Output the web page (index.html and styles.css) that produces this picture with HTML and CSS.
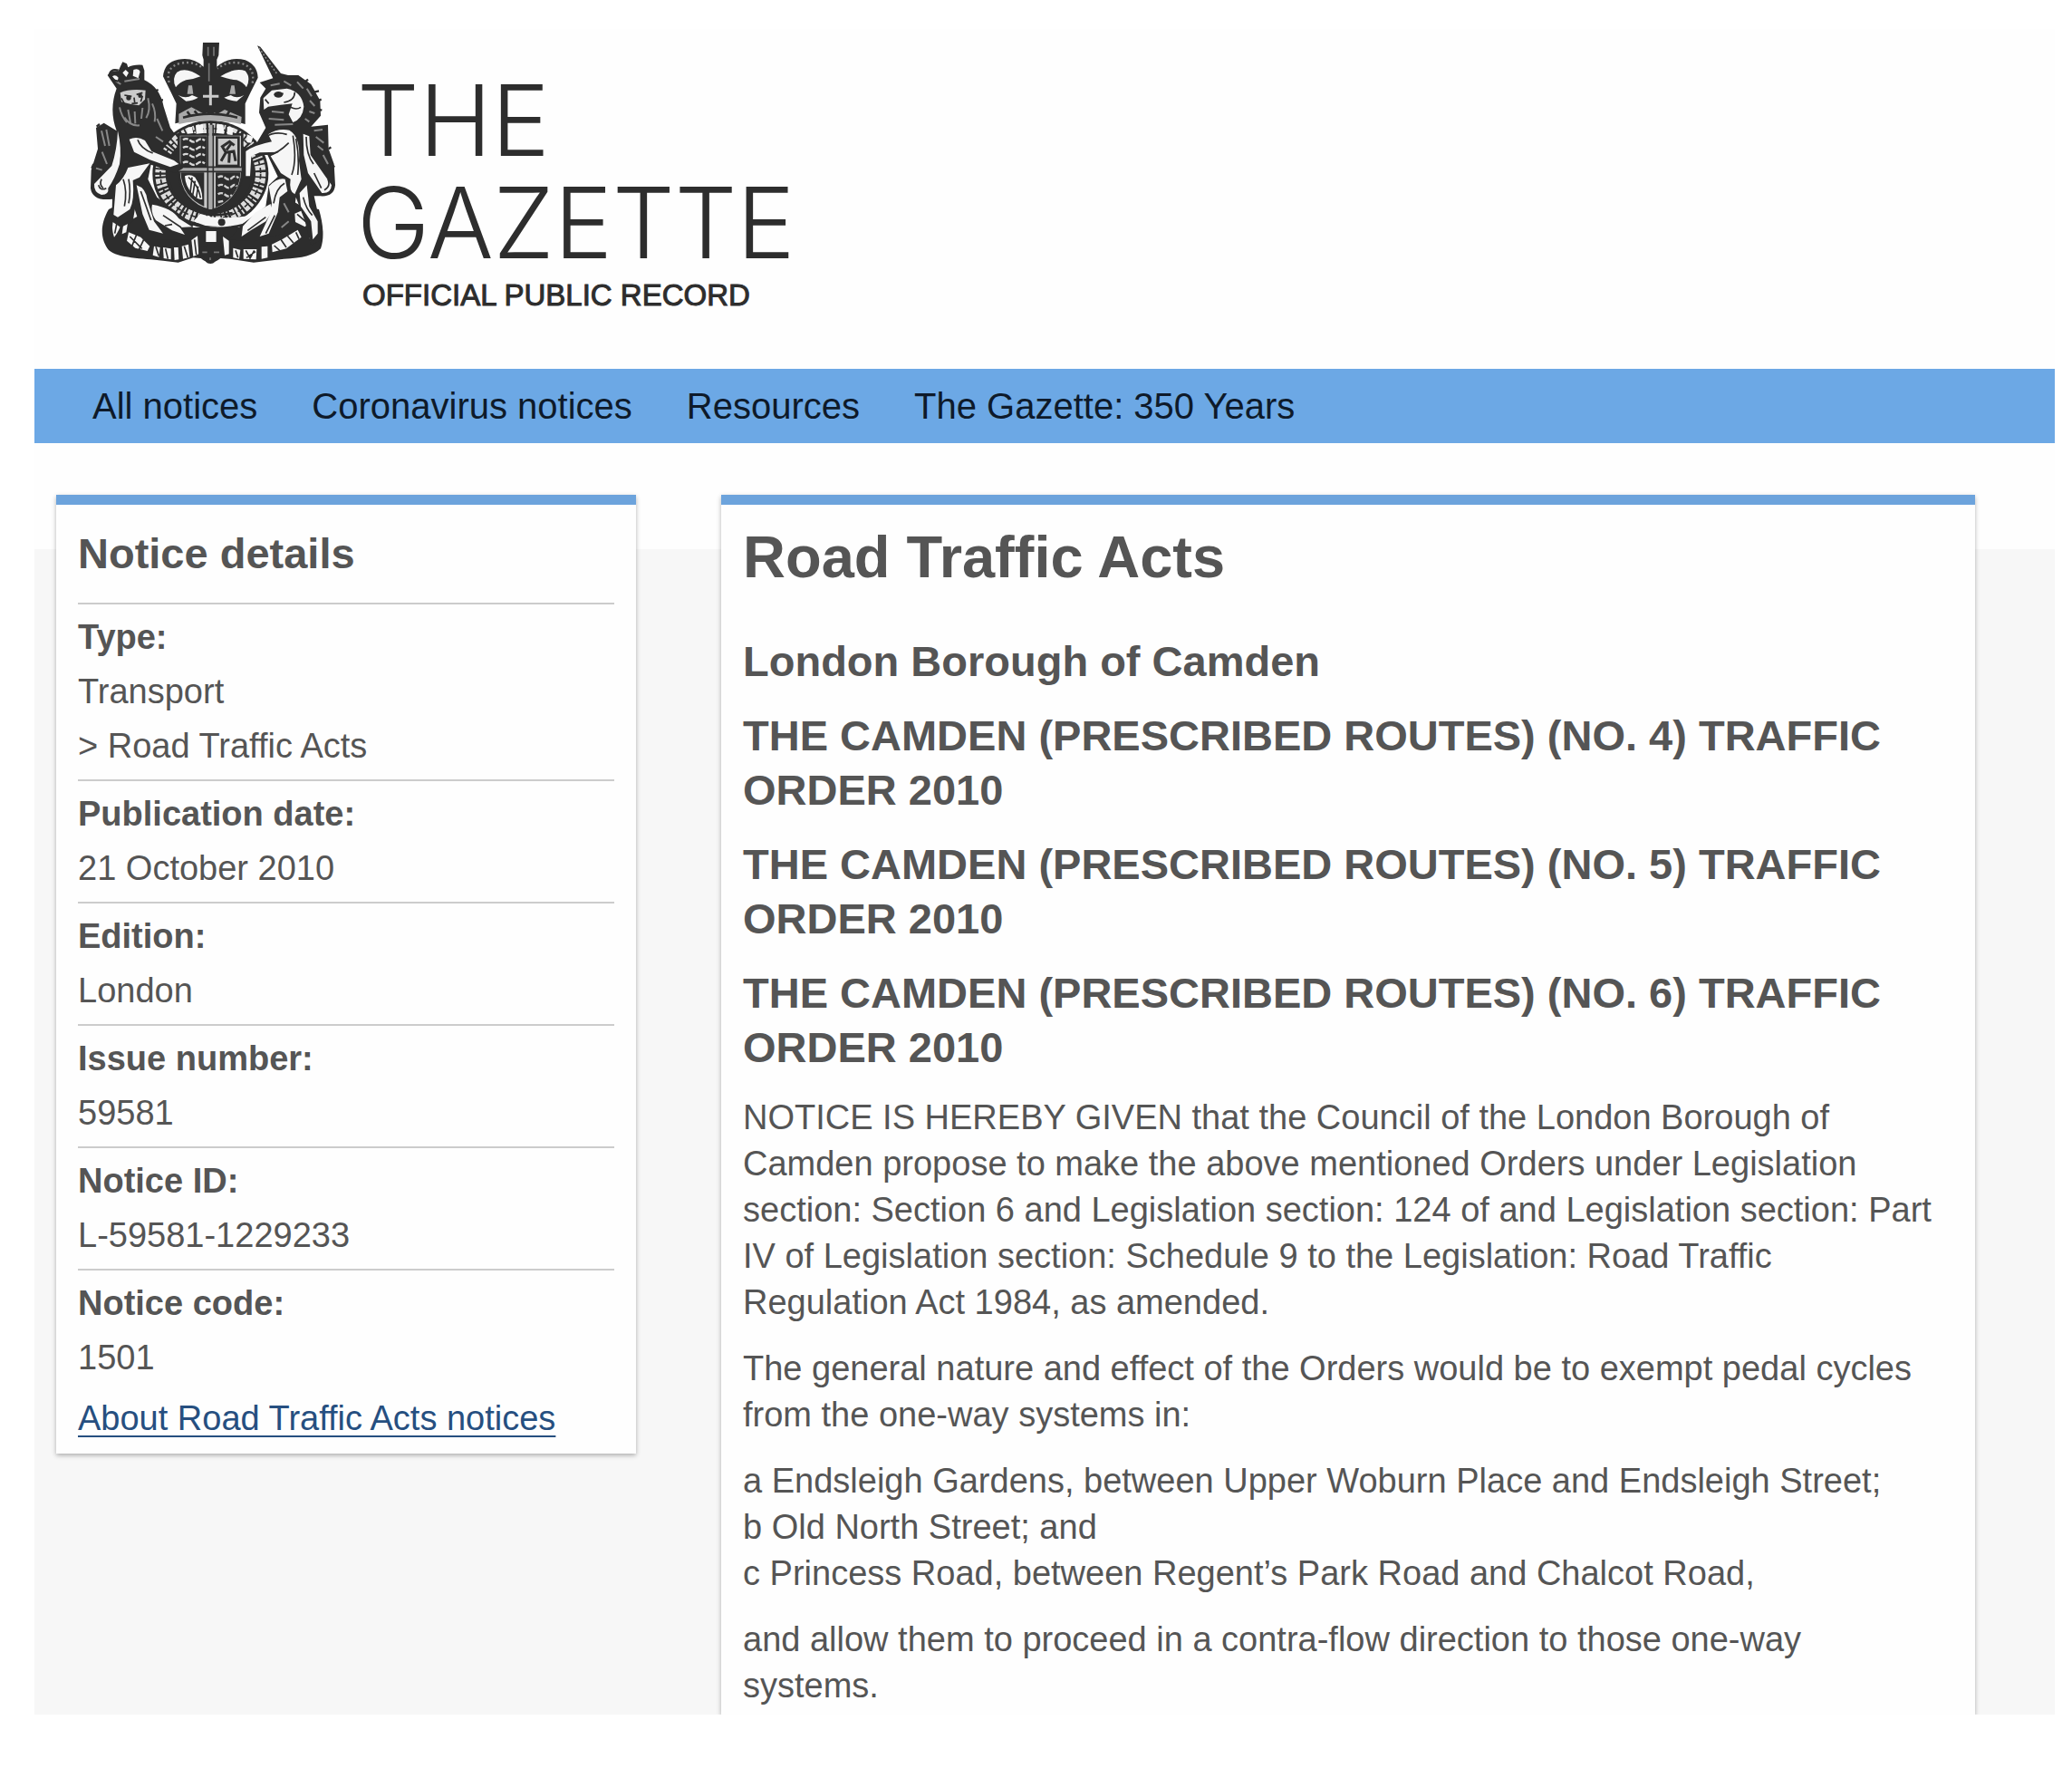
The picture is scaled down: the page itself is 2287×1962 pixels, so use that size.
FILE: index.html
```html
<!DOCTYPE html>
<html lang="en">
<head>
<meta charset="utf-8">
<meta name="viewport" content="width=device-width, initial-scale=1">
<title>Road Traffic Acts | The Gazette</title>
<link rel="stylesheet" href="styles.css">
</head>
<body>
<div class="page">
  <header class="masthead">
    <svg class="crest" viewBox="57 45 819 735" role="img" aria-label="Royal coat of arms">
      <!-- compartment and scroll -->
      <path class="ink" d="M120 600 C90 650 92 700 120 735 C150 762 230 762 300 770 L350 776 L400 760 L425 762 Q457 790 490 762 L520 764 L600 776 L700 764 Q790 762 822 730 C836 690 828 640 816 600 L760 590 L690 550 L560 660 L400 660 L250 560 L200 560 Z"/>
      <g class="light">
        <path d="M138 630 q20 -6 22 22 q-8 24 -22 40 q-12 -34 0 -62z"/>
        <path d="M182 604 l22 -10 l10 30 l-26 14z"/>
        <path d="M170 640 l14 0 l-6 36 l-14 6z"/>
        <path d="M186 676 l40 16 l30 30 l-8 16 l-40 -10 l-28 -24z"/>
        <path d="M270 722 l20 4 l-4 32 l-20 -6z"/>
        <path d="M300 726 l26 4 l0 36 l-24 -4z"/>
        <path d="M336 726 l14 0 l2 40 l-14 2z"/>
        <path d="M362 722 l22 -6 l4 42 l-22 6z"/>
        <path d="M394 702 l20 -14 l4 60 l-18 8z"/>
        <path d="M442 672 l34 0 l0 36 l-34 0z"/>
        <path d="M498 690 l20 14 l0 44 l-14 4z"/>
        <path d="M532 728 l24 6 l-4 30 l-20 -4z"/>
        <path d="M566 732 l44 0 l-2 34 l-42 -2z"/>
        <path d="M626 724 l20 -2 l0 38 l-20 4z"/>
        <path d="M660 716 l36 -18 l50 -30 l12 24 l-50 38 l-46 12z"/>
        <path d="M736 614 l24 -10 l28 34 l-18 20 l-32 -16z"/>
        <path d="M790 640 q26 10 24 40 l-22 34 l-8 -20 q14 -20 6 -54z"/>
      </g>
      <g class="line thin">
        <path d="M190 690 l40 40 M212 684 l-16 40 M236 700 l-16 34 M276 724 l10 30 M308 730 l8 34 M370 722 l12 38 M404 700 l6 50 M540 736 l8 24 M574 736 l14 26 l14 -26 M576 760 l30 -20 M668 720 l20 18 M690 700 l18 26 M712 688 l20 24 M740 676 l10 22 M744 616 l32 28 M148 640 l-8 40"/>
      </g>
      <!-- garter -->
      <ellipse class="ink" cx="457" cy="482" rx="192" ry="176"/>
      <ellipse cx="457" cy="482" rx="166" ry="150" fill="none" stroke="#ddd" stroke-width="34" stroke-dasharray="9 5 16 7 5 8"/>
      <ellipse class="line thin" cx="457" cy="482" rx="166" ry="150" stroke-dasharray="18 9"/>
      <ellipse class="line" cx="457" cy="482" rx="140" ry="130" stroke-width="8"/>
      <!-- shield -->
      <path d="M352 352 H562 V470 C562 540 520 590 457 604 C394 590 352 540 352 470 Z" fill="#c8c8c8" stroke="#2d2d2d" stroke-width="8"/>
      <path class="ink" d="M358 358 H446 V464 H358 Z"/>
      <g stroke="#d8d8d8" stroke-width="7" fill="none">
        <path d="M366 370 q12 -8 24 2 t24 0 t24 0 M366 396 q12 -8 24 2 t24 0 t24 0 M366 420 q12 -8 24 2 t24 0 t24 0 M366 446 q12 -8 24 2 t24 0 t24 0" stroke-dasharray="18 5"/>
      </g>
      <rect class="line" x="478" y="362" width="72" height="94" stroke-width="8"/>
      <path class="line" stroke-width="9" d="M492 440 L508 412 L496 392 L520 376 L536 388 M508 412 L534 408 L540 440 M520 412 L518 446 M524 384 l-14 20"/>
      <path class="ink" d="M358 478 H436 V590 C390 572 362 534 358 478 Z"/>
      <path class="light" d="M372 490 q18 -8 34 4 q24 36 24 72 q-14 4 -30 -14 q-26 -26 -28 -62z"/>
      <path class="line thin" d="M384 494 q34 26 40 68 M396 494 l-6 50 M406 506 l-8 48 M416 524 l-6 38"/>
      <path class="ink" d="M474 478 H556 C554 534 524 574 474 594 Z"/>
      <g stroke="#cfcfcf" stroke-width="7" fill="none">
        <path d="M482 494 q12 -8 24 2 t22 0 t22 0 M482 522 q12 -8 24 2 t22 0 t16 0 M482 550 q12 -8 24 2 t22 0 M482 576 l20 -4" stroke-dasharray="17 5"/>
      </g>
      <path d="M457 320 V600 M352 468 H560" fill="none" stroke="#aaa" stroke-width="12"/>
      <path d="M448 320 V600 M466 320 V600 M352 460 H560 M352 475 H560" class="line thin"/>
      <!-- buckle and ribbon under the shield -->
      <path class="light" d="M424 614 Q460 632 540 626 L586 622 L560 650 Q500 662 440 654 L400 640 Z"/>
      <path class="line" stroke-width="8" d="M400 600 Q456 630 530 612 M396 648 Q470 676 570 650"/>
      <circle class="ink" cx="494" cy="643" r="12"/>
      <!-- crown -->
      <path class="ink" d="M340 316 L344 250 L326 212 L300 160 Q304 112 350 104 Q400 94 434 128 L434 104 L430 90 L432 48 L486 48 L484 90 L478 104 L478 128 Q520 92 572 106 Q612 122 614 164 L590 212 L572 250 L572 318 Q457 286 340 316 Z"/>
      <g class="light">
        <path d="M346 146 Q376 126 424 160 Q400 170 376 172 Q354 180 342 196 Q328 166 346 146 Z"/>
        <path d="M572 142 Q540 128 490 160 Q520 170 544 172 Q566 180 576 196 Q592 164 572 142 Z"/>
        <path d="M350 222 Q376 236 396 222 L416 230 Q400 240 376 242 Z"/>
        <path d="M568 222 Q544 236 524 222 L502 230 Q520 240 544 242 Z"/>
      </g>
      <path d="M457 190 v66 M432 226 h52" fill="none" stroke="#ccc" stroke-width="9"/>
      <g fill="#aaa">
        <path d="M384 190 l12 0 l4 28 l-20 0z M526 190 l10 0 l4 28 l-20 0z"/>
        <path d="M352 284 l22 -12 l20 -10 l22 12 l20 10 l22 -10 l22 10 l24 -14 l22 10 l34 14 l-2 24 q-100 -22 -206 0z"/>
      </g>
      <path d="M320 180 Q306 128 360 116 Q404 108 432 134 M596 182 Q606 128 556 116 Q512 108 480 134" fill="none" stroke="#888" stroke-width="7" stroke-dasharray="6 9"/>
      <path class="line" d="M366 296 q92 -24 180 0 M380 276 l10 14 M404 274 l10 12 M520 274 l-8 14" stroke-width="8"/>
      <circle class="ink" cx="457" cy="276" r="12"/>
      <path d="M449 62 v30 M468 62 v30 M452 116 v60" fill="none" stroke="#777" stroke-width="5"/>
      <g class="light">
        <path d="M478 318 l22 2 l2 30 l-24 -2z M512 326 l20 4 l-2 24 l-18 -2z M408 322 l24 -4 l0 30 l-22 2z M380 330 l16 -4 l4 22 l-20 2z M578 352 l20 8 l-6 20 l-14 -2z"/>
      </g>
      <!-- lion -->
      <path class="ink" d="M116 156 Q124 140 152 142 L158 128 L166 112 L180 118 L184 130 Q200 120 232 122 L238 140 L238 172 Q290 196 302 260 L324 330 L340 352 L300 400 L352 436 L366 464 L340 480 L260 452 L250 500 L280 560 L400 650 L384 700 L280 700 L238 640 L212 566 L200 640 L160 660 L130 640 L132 566 Q66 574 60 530 L62 470 L84 400 L78 330 L104 314 L130 330 L146 340 Q120 270 146 200 Z"/>
      <g class="light">
        <path d="M132 160 q10 -8 20 4 l-4 16z M166 148 l10 -10 l10 10 l-8 14z M202 138 q18 -6 22 6 l-6 22 l-18 -8z"/>
        <path d="M188 368 Q214 356 240 372 L262 408 L336 438 L352 450 L324 460 L256 436 L204 410 Z"/>
        <path d="M150 340 Q164 400 156 450 Q140 500 118 530 Q122 550 96 552 Q70 544 72 516 L130 456 Q148 400 150 340 Z"/>
        <path d="M184 462 L256 448 L222 494 L200 504 Q206 570 190 600 L150 626 L136 618 L144 520 Q170 500 184 462 Z"/>
        <path d="M212 520 Q244 530 248 570 L270 640 L300 680 L254 668 L232 616 Z"/>
        <path d="M264 584 Q330 596 352 630 L396 658 L356 660 L372 684 L330 670 L276 636 Q258 610 264 584 Z"/>
      </g>
      <path d="M158 214 Q190 200 242 206 L240 236 L220 256 L194 252 L162 244 Z" fill="#ccc"/>
      <g class="line thin">
        <path d="M172 222 l24 4 M212 220 l20 -6 M204 230 l2 16 M162 232 l10 18 M196 250 l20 -2 M232 224 l-6 20 M168 500 q14 40 4 90 M186 500 q8 40 0 80 M216 370 q10 30 50 44 M226 540 q18 50 34 96 M300 620 l60 40 M86 520 q6 20 26 10 M96 500 q-8 20 6 30 M330 650 l-24 4"/>
      </g>
      <circle class="ink" cx="186" cy="231" r="8"/>
      <circle class="ink" cx="224" cy="224" r="7"/>
      <g stroke="#888" stroke-width="6" fill="none">
        <path d="M156 262 q6 30 24 50 M184 270 l8 44 M206 276 l2 40 M232 264 l-4 36 M250 232 q10 40 -6 66 M264 250 q14 30 8 60 M172 296 q20 30 50 26 M280 300 l18 40 M144 176 l16 10 M172 176 l50 -8 M96 340 l12 50 M112 336 l10 54 M98 410 l16 40 M78 464 l20 6 M276 360 l24 16"/>
      </g>
      <path class="line" stroke-width="7" d="M152 140 q-22 -6 -28 10 q2 22 26 26 M90 318 l-10 8 M70 450 l-6 14 M270 210 l14 -6 M286 238 l14 0"/>
      <!-- unicorn -->
      <path class="ink" d="M612 58 L622 62 L690 150 L714 156 L748 156 L790 186 L820 240 L822 290 L790 326 L846 320 L848 400 L866 450 L870 520 Q866 560 820 556 L800 556 L812 610 L824 700 L790 720 L770 640 L740 560 L730 640 L700 680 L600 706 L520 700 L560 650 L640 590 L650 520 L680 492 L646 420 L590 420 L586 500 L566 500 L566 400 L610 380 L640 330 L618 280 L622 230 L640 200 L620 180 L664 166 Z"/>
      <path d="M618 66 L676 150" stroke="#888" stroke-width="5" stroke-dasharray="6 6" fill="none"/>
      <g class="light">
        <path d="M632 232 L660 206 L710 200 Q760 210 766 260 Q762 300 730 312 L716 286 L728 250 L690 254 L648 260 L634 270 Z"/>
        <path d="M648 352 Q680 330 718 338 Q756 360 750 440 L758 500 L736 550 Q716 540 722 500 L690 480 L656 424 L684 410 L620 412 L592 424 L588 490 L574 490 L574 408 Q600 388 660 376 Z"/>
        <path d="M764 350 L784 358 L788 420 L834 486 L858 520 Q856 548 826 546 L780 480 L766 420 Z"/>
        <path d="M650 524 Q680 494 704 500 L712 540 L686 560 L680 610 L650 680 L620 690 L652 620 L660 580 Z"/>
        <path d="M564 656 L606 610 L656 582 L660 610 L640 640 L590 670 L560 690 Z"/>
        <path d="M752 546 L776 520 L784 590 L812 640 L812 680 L796 700 L790 640 L756 590 Z"/>
      </g>
      <g class="line thin">
        <path d="M670 224 l28 -8 M700 246 q36 -6 36 -34 M722 262 q20 10 34 0 M638 236 l12 14 M730 356 q14 80 -4 130 M740 366 q12 60 6 120 M648 420 q30 -2 68 -40 M774 360 q0 60 24 90 M666 580 q8 -50 36 -66 M670 620 l-30 60 M580 670 l60 -44 M764 560 q10 40 30 60 M800 480 l24 50 M846 500 q10 24 -12 36 M640 360 q30 -20 70 -8"/>
      </g>
      <ellipse class="ink" cx="682" cy="220" rx="15" ry="10"/>
      <g stroke="#888" stroke-width="6" fill="none">
        <path d="M700 176 l24 14 M744 178 l20 22 M776 200 l16 26 M786 240 l16 18 M784 276 l18 6 M770 300 l14 10 M656 190 l30 -6 M660 276 l40 4 M650 300 l50 4 M670 320 l60 -2 M800 340 l28 -4 M806 360 l26 20 M812 390 l18 14 M830 420 l16 30 M700 580 l16 30 M716 640 l-24 20"/>
      </g>
      <path class="line" stroke-width="7" d="M800 212 l16 -4 M814 240 l10 -4 M816 270 l10 2 M770 178 l10 -8 M848 400 l8 -6 M862 460 l6 -4"/>
      <path class="ink" d="M418 728 q16 -10 28 0 l0 -20 h24 v20 q14 -8 28 0 v24 h-20 q-2 28 -21 28 q-20 0 -22 -26 h-17z"/>
      <path d="M430 742 h16 M468 742 h18 M456 760 v8" stroke="#777" stroke-width="5"/>
    </svg>
    <div class="brand">
      <p class="wordmark">THE<br>GAZETTE</p>
      <p class="tagline">OFFICIAL PUBLIC RECORD</p>
    </div>
  </header>

  <nav class="nav" aria-label="Main">
    <a href="#">All notices</a>
    <a href="#">Coronavirus notices</a>
    <a href="#">Resources</a>
    <a href="#">The Gazette: 350 Years</a>
  </nav>

  <main class="content">
    <aside class="card details">
      <h2>Notice details</h2>
      <dl>
        <div><dt>Type:</dt><dd>Transport</dd><dd>&gt; Road Traffic Acts</dd></div>
        <div><dt>Publication date:</dt><dd>21 October 2010</dd></div>
        <div><dt>Edition:</dt><dd>London</dd></div>
        <div><dt>Issue number:</dt><dd>59581</dd></div>
        <div><dt>Notice ID:</dt><dd>L-59581-1229233</dd></div>
        <div><dt>Notice code:</dt><dd>1501</dd></div>
      </dl>
      <p class="more"><a href="#">About Road Traffic Acts notices</a></p>
    </aside>

    <article class="card notice">
      <h1>Road Traffic Acts</h1>
      <h2>London Borough of Camden</h2>
      <h2>THE CAMDEN (PRESCRIBED ROUTES) (NO. 4) TRAFFIC ORDER 2010</h2>
      <h2>THE CAMDEN (PRESCRIBED ROUTES) (NO. 5) TRAFFIC ORDER 2010</h2>
      <h2>THE CAMDEN (PRESCRIBED ROUTES) (NO. 6) TRAFFIC ORDER 2010</h2>
      <p>NOTICE IS HEREBY GIVEN that the Council of the London Borough of Camden propose to make the above mentioned Orders under Legislation section: Section 6 and Legislation section: 124 of and Legislation section: Part IV of Legislation section: Schedule 9 to the Legislation: Road Traffic Regulation Act 1984, as amended.</p>
      <p>The general nature and effect of the Orders would be to exempt pedal cycles from the one-way systems in:</p>
      <p>a Endsleigh Gardens, between Upper Woburn Place and Endsleigh Street;<br>b Old North Street; and<br>c Princess Road, between Regent’s Park Road and Chalcot Road,</p>
      <p>and allow them to proceed in a contra-flow direction to those one-way systems.</p>
    </article>
  </main>
</div>
</body>
</html>
```
FILE: styles.css
```css
* {
  box-sizing: border-box;
}

body {
  margin: 0;
  background: #fff;
  color: #555;
  font-family: "Liberation Sans", Arial, sans-serif;
  font-size: 38px;
}

h1, h2, p, dl, dd {
  margin: 0;
}

.page {
  margin: 32px 19px 70px 38px;
  background: #fefefe;
  overflow: hidden;
}

/* Masthead */
.masthead {
  display: flex;
  align-items: flex-start;
  gap: 22px;
  padding: 14px 61px 61px;
  color: #2d2d2d;
}

.crest {
  width: 273px;
  height: 245px;
  flex: none;
}

.crest .ink {
  fill: #2d2d2d;
}

.crest .light {
  fill: #f6f6f6;
}

.crest .line {
  fill: none;
  stroke: #2d2d2d;
}

.crest .thin {
  stroke-width: 5px;
}

.brand {
  display: flex;
  flex-direction: column;
  gap: 4px;
  padding-top: 30px;
}

.wordmark {
  font-family: Inter, Lato, sans-serif;
  font-weight: 300;
  font-size: 108px;
  line-height: 113px;
}

.tagline {
  padding-left: 6px;
  font-size: 33px;
  line-height: 40px;
  -webkit-text-stroke: 1px #2d2d2d;
}

/* Navigation bar */
.nav {
  display: flex;
  flex-wrap: wrap;
  gap: 0 60px;
  padding: 0 64px;
  background: #6ca8e5;
  font-size: 40px;
  line-height: 82px;
}

.nav a {
  color: #0e1a2a;
  text-decoration: none;
}

/* Two-column content */
.content {
  display: grid;
  grid-template-columns: 640px minmax(0, 1fr);
  align-items: start;
  gap: 94px;
  padding: 57px 88px 0 24px;
  background: linear-gradient(#fefefe 117px, #f7f7f7 117px);
}

.card {
  padding: 24px;
  border-top: 11px solid #6ca3dc;
  background: #fefefe;
  box-shadow: 0 2px 5px rgba(0, 0, 0, 0.3);
}

.card h2 {
  font-size: 47px;
  line-height: 60px;
}

/* Notice details */
.details {
  padding-bottom: 9px;
  line-height: 60px;
}

.details h2 {
  padding-bottom: 24px;
}

.details dl > div {
  padding: 6px 0 7px;
  border-top: 2px solid #ccc;
}

.details dt {
  font-weight: bold;
}

.more a {
  color: #264f80;
  text-decoration: underline;
  text-decoration-thickness: 2px;
  text-underline-offset: 6px;
}

/* Notice text */
.notice {
  padding: 20px 36px 6px 24px;
  line-height: 51px;
}

.notice h1 {
  margin-bottom: 47px;
  font-size: 65px;
  line-height: 76px;
}

.notice h2,
.notice p {
  margin-bottom: 22px;
}

.notice p:last-child {
  margin-bottom: 0;
}
```
